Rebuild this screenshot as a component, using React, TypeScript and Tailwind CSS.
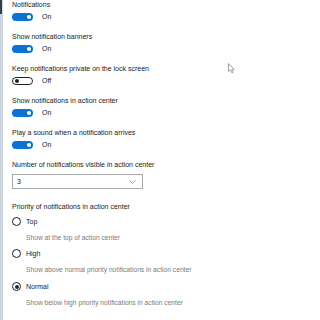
import React from 'react';

const font = { fontFamily: '"Liberation Sans", "Noto Sans", Arial, sans-serif' };

function Toggle({ on }: { on: boolean }) {
  return on ? (
    <span className="flex h-[8px] w-[21px] items-center justify-end rounded-full bg-[#0a74d4] pr-[2px]">
      <span className="h-[4.5px] w-[4.5px] rounded-full bg-white" />
    </span>
  ) : (
    <span className="flex h-[8px] w-[21px] items-center rounded-full border border-[#222] pl-[2px]">
      <span className="h-[4px] w-[4px] rounded-full bg-[#222]" />
    </span>
  );
}

function ToggleSetting({ label, on, first }: { label: string; on: boolean; first?: boolean }) {
  return (
    <div className={first ? '' : 'mt-[11px]'}>
      <div className="h-[9px] text-[7px] leading-[9px] text-[#1a1a1a]">{label}</div>
      <div className="mt-[4px] flex h-[8px] items-center gap-[9px]">
        <Toggle on={on} />
        <span className="text-[7px] leading-[8px] text-[#1a1a1a]">{on ? 'On' : 'Off'}</span>
      </div>
    </div>
  );
}

function Radio({ label, desc, checked, className }: { label: string; desc: string; checked?: boolean; className: string }) {
  return (
    <div className={className}>
      <div className="flex h-[9px] items-center gap-[5px]">
        <span className="flex h-[9px] w-[9px] items-center justify-center rounded-full border-[1.5px] border-[#1c1c1c]">
          {checked && <span className="h-[4px] w-[4px] rounded-full bg-[#1d2735]" />}
        </span>
        <span className="text-[7px] leading-[9px] text-[#1a1a1a]">{label}</span>
      </div>
      <div className="mt-[7px] pl-[14px] text-[6.7px] leading-[9px] text-[#7a7a7a]">{desc}</div>
    </div>
  );
}

export default function App() {
  return (
    <div className="relative flex h-[320px] w-[320px] overflow-hidden bg-white" style={font}>
      {/* window edge */}
      <div className="flex w-[3px] flex-col bg-[#cbd6e2]">
        <div className="h-[14px] w-[2px] bg-[#3a3f45]" />
      </div>

      <div className="flex flex-col pl-[9px]">
        <ToggleSetting label="Notifications" on first />
        <ToggleSetting label="Show notification banners" on />
        <ToggleSetting label="Keep notifications private on the lock screen" on={false} />
        <ToggleSetting label="Show notifications in action center" on />
        <ToggleSetting label="Play a sound when a notification arrives" on />

        <div className="mt-[11px] h-[9px] text-[7px] leading-[9px] text-[#1a1a1a]">
          Number of notifications visible in action center
        </div>
        <div className="mt-[5px] flex h-[15px] w-[131px] items-center justify-between border border-[#a8a8a8] pl-[4px] pr-[6px]">
          <span className="text-[7px] leading-[9px] text-[#1a1a1a]">3</span>
          <svg width="7" height="4" viewBox="0 0 7 4" fill="none" stroke="#8a8a8a" strokeWidth="0.8">
            <path d="M0.5 0.5 L3.5 3.3 L6.5 0.5" />
          </svg>
        </div>

        <div className="mt-[13px] h-[9px] text-[7px] leading-[9px] text-[#1a1a1a]">
          Priority of notifications in action center
        </div>
        <Radio className="mt-[6px]" label="Top" desc="Show at the top of action center" />
        <Radio className="mt-[7px]" label="High" desc="Show above normal priority notifications in action center" />
        <Radio className="mt-[8px]" label="Normal" desc="Show below high priority notifications in action center" checked />
      </div>

      {/* mouse pointer */}
      <svg className="absolute left-[228px] top-[63px]" width="7" height="11" viewBox="0 0 7 11">
        <path d="M0.5 0.5 L0.5 8.5 L2.5 6.8 L4 10 L5.2 9.4 L3.8 6.4 L6.3 6.4 Z" fill="#fff" stroke="#8c8c8c" strokeWidth="0.8" />
      </svg>
    </div>
  );
}
